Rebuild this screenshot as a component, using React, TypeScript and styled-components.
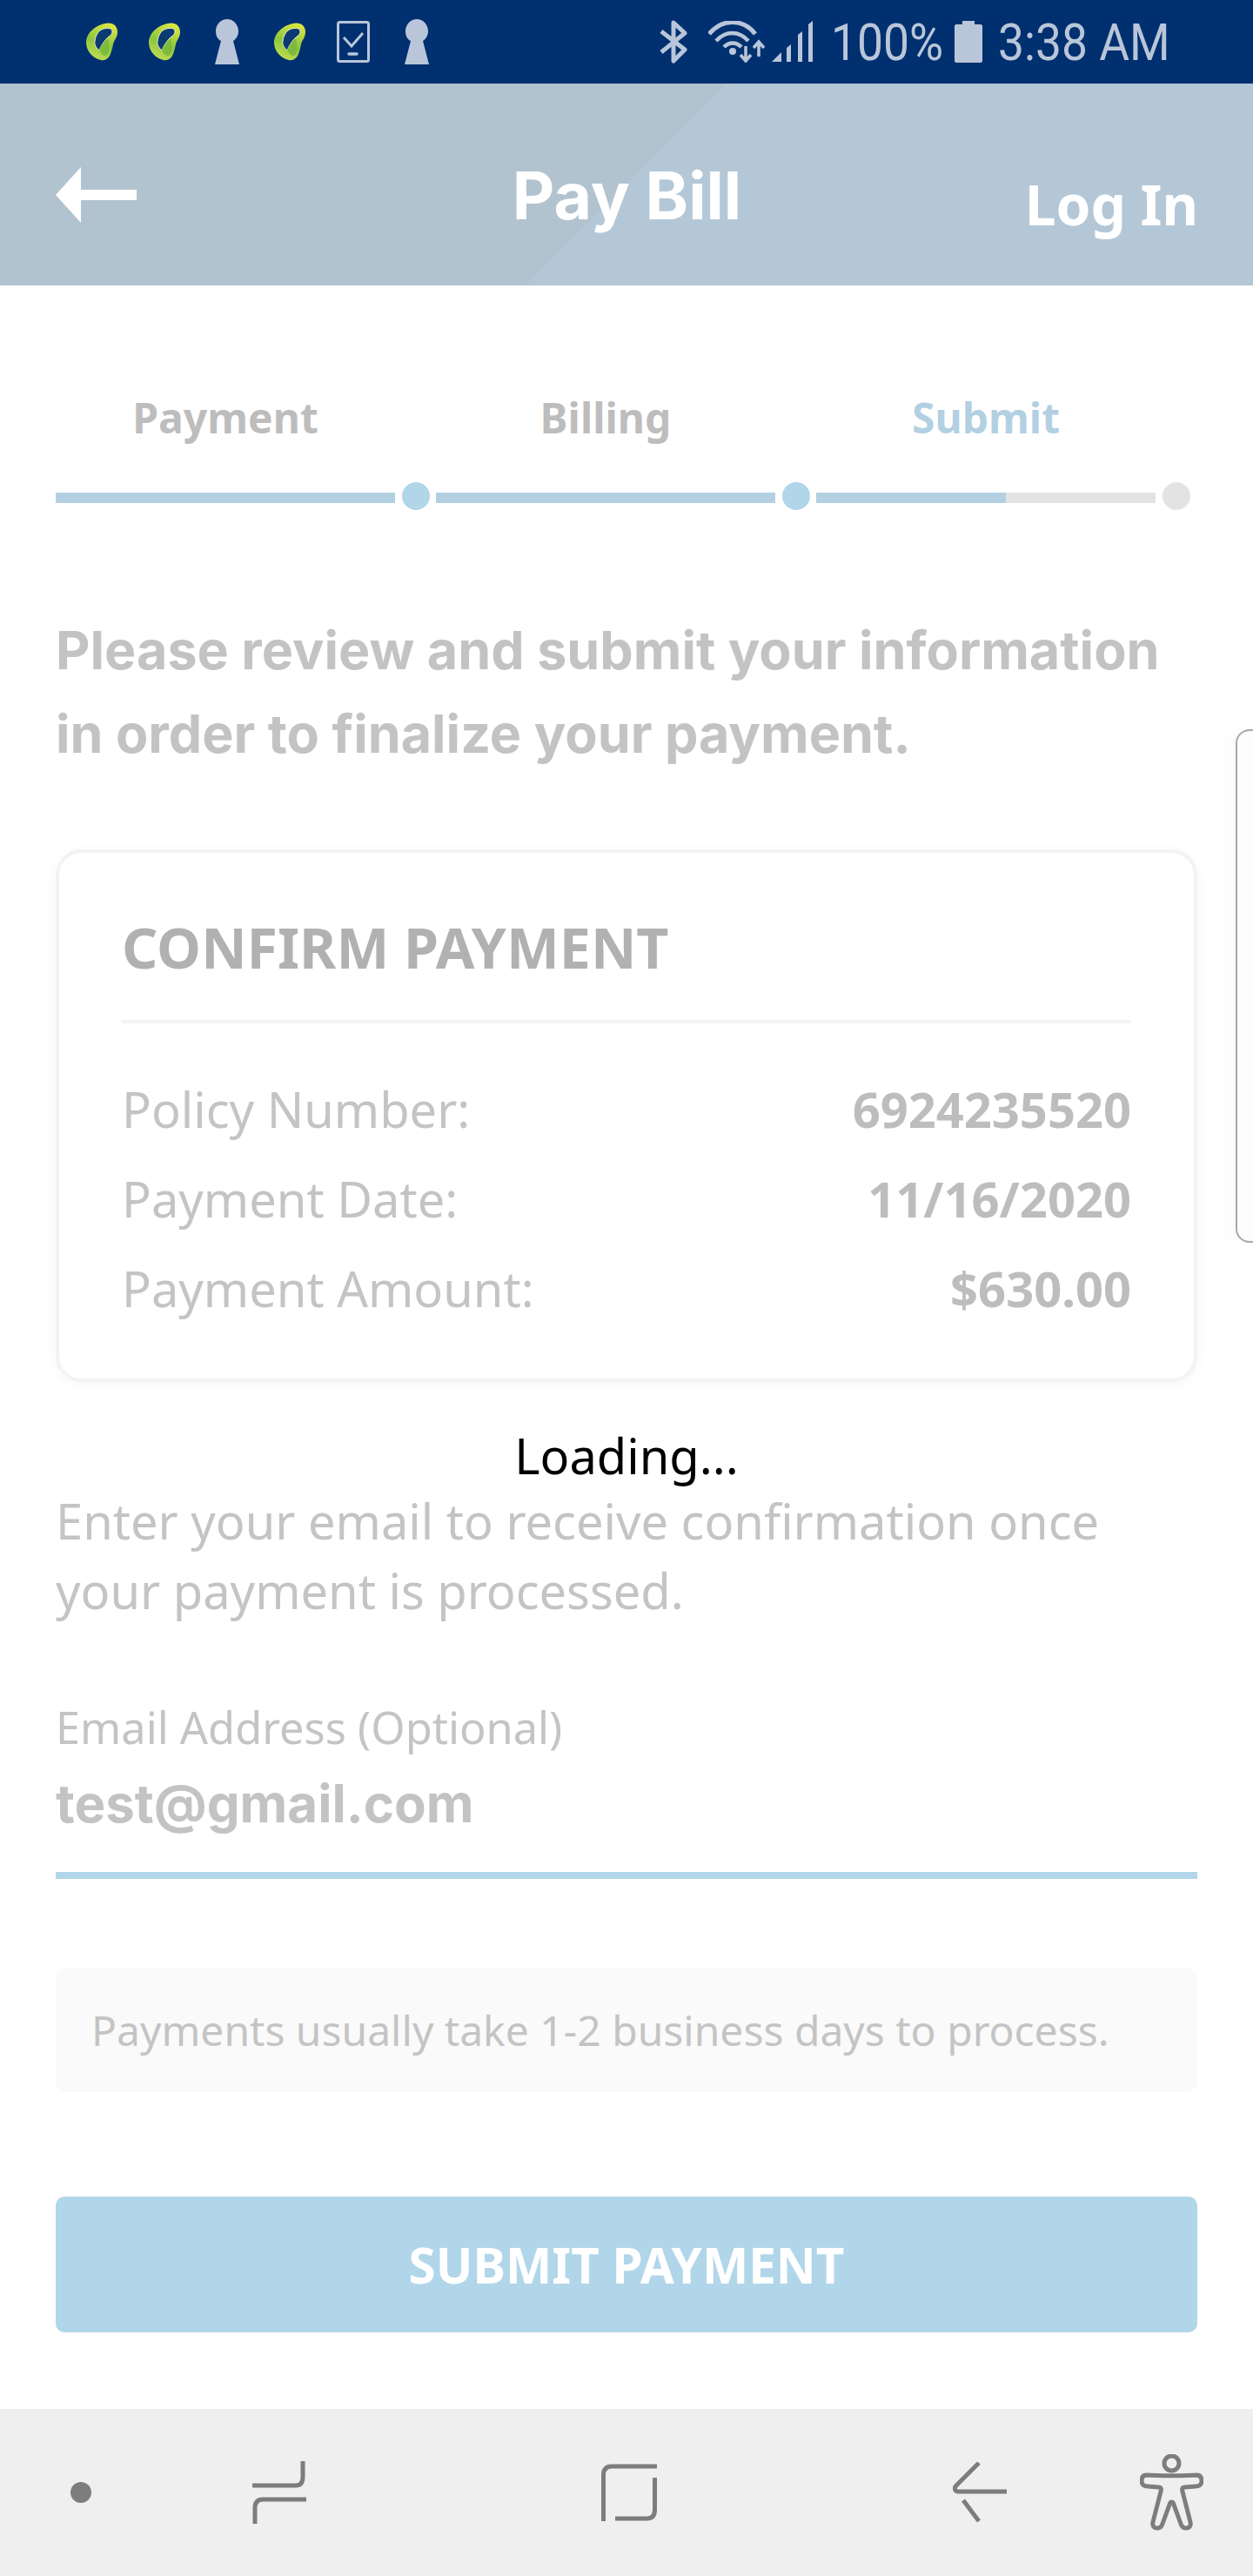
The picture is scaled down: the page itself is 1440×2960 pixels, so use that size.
import React from 'react';
import styled, { createGlobalStyle } from 'styled-components';

const GlobalStyle = createGlobalStyle`
  html, body {
    margin: 0;
    padding: 0;
    background: #fff;
    font-family: "Noto Sans", sans-serif;
  }
`;

const steps = [
  { label: 'Payment', fill: 100, done: true, color: '#bdbdbd' },
  { label: 'Billing', fill: 100, done: true, color: '#bdbdbd' },
  { label: 'Submit', fill: 56, done: false, color: '#b3d0e3' },
];

const rows = [
  ['Policy Number:', '6924235520'],
  ['Payment Date:', '11/16/2020'],
  ['Payment Amount:', '$630.00'],
];

const SeedIcon = () => (
  <svg width="36" height="44" viewBox="0 0 36 44">
    <defs>
      <linearGradient id="seed" x1="0.7" y1="0" x2="0.3" y2="1">
        <stop offset="0" stopColor="#dbe640" />
        <stop offset="0.55" stopColor="#8cc63f" />
        <stop offset="1" stopColor="#c4de52" />
      </linearGradient>
    </defs>
    <path
      d="M24 0.700C31 0 36 4 36 11C36 17 32 20 31 25C30 30 29 33 28 36C26 41 22 44 17 43C8 41 0 33 0 23C0 11 12 2 24 0.700Z"
      fill="url(#seed)"
    />
    <path
      d="M20 7C25 6 30 6 30 10C30 14 27 15 24 18C20 22 17 27 15 32C12 29 9 26 10 21C11 14 14 9 20 7Z"
      fill="#0c3a73"
      stroke="#eef3c4"
      strokeWidth="1"
    />
    <path d="M15 32C17 27 20 22 25 18C26 24 27 30 26 34C24 40 19 39 15 32Z" fill="#7dbb3c" />
  </svg>
);

const KeyholeIcon = () => (
  <Keyhole width="28" height="52" viewBox="0 0 28 52">
    <path d="M14 0C21 0 27 6 27 14C27 19 24 23 21 25L28 52H0L7 25C3 23 1 19 1 14C1 6 7 0 14 0Z" fill="#b9c6d9" />
  </Keyhole>
);

const PhoneCheckIcon = () => (
  <svg width="38" height="48" viewBox="0 0 38 48" fill="none" stroke="#b9c6d9">
    <rect x="1.500" y="1.500" width="35" height="45" rx="2" strokeWidth="3" />
    <path d="M8 19L17 29L30 14" strokeWidth="3" />
    <path d="M14 38H23" strokeWidth="3.500" strokeLinecap="round" />
  </svg>
);

const BluetoothIcon = () => (
  <svg width="32" height="50" viewBox="0 0 32 50" fill="none" stroke="#b9c6d9" strokeWidth="5" strokeLinejoin="round">
    <path d="M2 13L29 34L16 47V3L29 15L2 37" />
  </svg>
);

const WifiIcon = () => (
  <svg width="66" height="48" viewBox="0 0 66 48" fill="none" stroke="#b9c6d9">
    <path d="M1 15C16 -3 40 -3 54 15" strokeWidth="5" />
    <path d="M9 23C20 11 35 11 46 23" strokeWidth="4.500" />
    <path d="M18 30C24 24 32 24 38 30" strokeWidth="4.500" />
    <circle cx="28" cy="35" r="4" fill="#b9c6d9" stroke="none" />
    <path d="M43 29V45M37 39L43 46L49 39" strokeWidth="3.500" />
    <path d="M58 41V25M52 31L58 24L64 31" strokeWidth="3.500" />
  </svg>
);

const SignalIcon = () => (
  <svg width="48" height="48" viewBox="0 0 48 48" fill="#b9c6d9">
    <path d="M0 47L11 36V47Z" />
    <path d="M17 31L22 27V47H17Z" />
    <path d="M30 16L35 12V47H30Z" />
    <path d="M42 4L47 0V47H42Z" />
  </svg>
);

const BatteryIcon = () => (
  <svg width="32" height="48" viewBox="0 0 32 48" fill="#b9c6d9">
    <path d="M9 0H23V4H30C31 4 32 5 32 6V46C32 47 31 48 30 48H2C1 48 0 47 0 46V6C0 5 1 4 2 4H9Z" />
  </svg>
);

const BackArrow = () => (
  <svg width="93" height="64" viewBox="0 0 93 64" fill="#fff">
    <path d="M29 0V26H93V38H29V64L0 32Z" />
  </svg>
);

const RecentIcon = () => (
  <svg width="62" height="72" viewBox="0 0 62 72" fill="none" stroke="#7d7d7d">
    <path d="M58 0V18C58 25 55 28 50 28H0" strokeWidth="5" />
    <path d="M62 44H12C6 44 3 47 3 54V72" strokeWidth="5" />
  </svg>
);

const HomeIcon = () => (
  <svg width="64" height="66" viewBox="0 0 64 66" fill="none" stroke="#7d7d7d">
    <path d="M64 3H12C6 3 2.500 6 2.500 13V66" strokeWidth="5" />
    <path d="M61.500 16V53C61.500 60 58 63 52 63H16" strokeWidth="5" />
  </svg>
);

const BackIcon = () => (
  <svg width="62" height="70" viewBox="0 0 62 70" fill="none" stroke="#7d7d7d">
    <path d="M30 1L4 27C1 30 2 34 7 34H62" strokeWidth="5" />
    <path d="M12 44L30 68" strokeWidth="5" />
  </svg>
);

const AccessIcon = () => (
  <svg width="73" height="88" viewBox="0 0 73 88" fill="none" stroke="#7d7d7d" strokeWidth="5" strokeLinejoin="round">
    <circle cx="36.500" cy="10.500" r="8.500" />
    <path d="M8 24C20 25 53 25 65 24C70 24 71 28 71 31C71 35 68 37 64 37L51 38C49 38 48 40 49 43L58 78C59 82 57 85 53 85C50 85 48 83 47 80L39 58C38 54 35 54 34 58L26 80C25 83 23 85 20 85C16 85 14 82 15 78L24 43C25 40 24 38 22 38L9 37C5 37 2 35 2 31C2 28 3 24 8 24Z" />
  </svg>
);

const App: React.FC = () => {
  return (
    <Page>
      <GlobalStyle />
      <StatusBar>
        <StatusIcons>
          <SeedIcon />
          <SeedIcon />
          <KeyholeIcon />
          <SeedIcon />
          <PhoneCheckIcon />
          <KeyholeIcon />
        </StatusIcons>
        <StatusRight>
          <BluetoothIcon />
          <WifiSlot>
            <WifiIcon />
          </WifiSlot>
          <SignalIcon />
          <StatusText>100%</StatusText>
          <BatteryIcon />
          <ClockText>3:38 AM</ClockText>
        </StatusRight>
      </StatusBar>

      <Header>
        <BackButton>
          <BackArrow />
        </BackButton>
        <Title>Pay Bill</Title>
        <LogIn>Log In</LogIn>
      </Header>

      <Main>
        <Steps>
          {steps.map((step) => (
            <Step key={step.label}>
              <StepLabel $color={step.color}>{step.label}</StepLabel>
              <StepTrack>
                <StepBar>
                  <StepFill style={{ width: `${step.fill}%` }} />
                </StepBar>
                <StepDot $done={step.done} />
              </StepTrack>
            </Step>
          ))}
        </Steps>

        <Lead>
          Please review and submit your information
          <br />
          in order to finalize your payment.
        </Lead>

        <Card>
          <CardTitle>CONFIRM PAYMENT</CardTitle>
          {rows.map(([name, value]) => (
            <Row key={name}>
              <RowName>{name}</RowName>
              <RowValue>{value}</RowValue>
            </Row>
          ))}
        </Card>

        <Loading>Loading...</Loading>

        <Info>
          Enter your email to receive confirmation once
          <br />
          your payment is processed.
        </Info>

        <FieldLabel>Email Address (Optional)</FieldLabel>
        <FieldValue>test@gmail.com</FieldValue>

        <Note>Payments usually take 1-2 business days to process.</Note>

        <SubmitButton>SUBMIT PAYMENT</SubmitButton>
      </Main>

      <SideHandle />

      <NavBar>
        <NavDot />
        <NavItem $gap={185}>
          <RecentIcon />
        </NavItem>
        <NavItem $gap={339}>
          <HomeIcon />
        </NavItem>
        <NavItem $gap={340}>
          <BackIcon />
        </NavItem>
        <NavItem $gap={153}>
          <AccessIcon />
        </NavItem>
      </NavBar>
    </Page>
  );
};

export default App;

const Page = styled.div`
  position: relative;
  width: 1440px;
  height: 2960px;
  display: flex;
  flex-direction: column;
  background: #fff;
  overflow: hidden;
`;

const StatusBar = styled.div`
  height: 96px;
  flex: none;
  display: flex;
  justify-content: space-between;
  align-items: center;
  padding: 0 100px 0 99px;
  background: #003070;
`;

const StatusIcons = styled.div`
  display: flex;
  align-items: center;
  gap: 36px;
`;

const Keyhole = styled.svg`
  margin: 0 4px;
`;

const StatusRight = styled.div`
  display: flex;
  align-items: center;
`;

const WifiSlot = styled.div`
  display: flex;
  margin: 0 7px 0 24px;
`;

const StatusText = styled.span`
  font-family: Roboto, sans-serif;
  font-size: 60px;
  line-height: 60px;
  color: #b9c6d9;
  width: 123px;
  margin: 2px 19px 0 20px;
  white-space: nowrap;
  transform: scaleX(0.89);
  transform-origin: left center;
`;

const ClockText = styled(StatusText)`
  width: 193px;
  margin: 2px 0 0 18px;
`;

const Header = styled.header`
  height: 232px;
  flex: none;
  display: grid;
  grid-template-columns: 1fr auto 1fr;
  align-items: center;
  padding: 0 63px 0 64px;
  background: linear-gradient(135deg, #b2c3d0 50%, #b4c7d6 50%);
  color: #fff;
`;

const BackButton = styled.div`
  display: flex;
  height: 64px;
  margin-top: 24px;
`;

const Title = styled.h1`
  margin: 26px 0 0;
  font-family: Inter, sans-serif;
  font-weight: 700;
  font-size: 75px;
  line-height: 90px;
`;

const LogIn = styled.div`
  justify-self: end;
  font-weight: 700;
  font-size: 64px;
  line-height: 86px;
  margin-top: 46px;
`;

const Main = styled.main`
  flex: 1;
  display: flex;
  flex-direction: column;
  padding: 0 64px;
`;

const Steps = styled.div`
  display: flex;
  gap: 7px;
  padding: 122px 8px 0 0;
`;

const Step = styled.div`
  flex: 1;
  display: flex;
  flex-direction: column;
`;

const StepLabel = styled.div<{ $color: string }>`
  height: 60px;
  text-align: center;
  padding-right: 40px;
  font-weight: 700;
  font-size: 48px;
  line-height: 60px;
  color: ${(p) => p.$color};
`;

const StepTrack = styled.div`
  display: flex;
  align-items: center;
  gap: 8px;
  margin-top: 44px;
`;

const StepBar = styled.div`
  flex: 1;
  height: 12px;
  margin-top: 3px;
  background: #e3e3e3;
`;

const StepFill = styled.div`
  height: 100%;
  background: #b3d0e3;
`;

const StepDot = styled.div<{ $done: boolean }>`
  width: 32px;
  height: 32px;
  flex: none;
  border-radius: 50%;
  background: ${(p) => (p.$done ? '#b1d6ea' : '#e3e3e3')};
`;

const Lead = styled.p`
  margin: 113px 0 0;
  font-family: Inter, sans-serif;
  font-weight: 700;
  font-size: 61px;
  line-height: 96px;
  color: #c3c3c3;
  white-space: nowrap;
`;

const Card = styled.section`
  margin-top: 85px;
  height: 612px;
  box-sizing: border-box;
  padding: 65px 72px 0;
  background: #fff;
  border: 4px solid #f3f3f3;
  border-radius: 30px;
  box-shadow: 0 2px 14px rgba(0, 0, 0, 0.04);
`;

const CardTitle = styled.h2`
  margin: 0 0 47px;
  height: 131px;
  box-sizing: border-box;
  border-bottom: 4px solid #f3f3f3;
  font-weight: 700;
  font-size: 64.500px;
  line-height: 87px;
  color: #b1b1b1;
`;

const Row = styled.div`
  display: flex;
  justify-content: space-between;
  align-items: center;
  height: 104px;
  margin-top: -1px;
  font-size: 56px;
`;

const RowName = styled.span`
  color: #c4c4c4;
`;

const RowValue = styled.span`
  font-weight: 700;
  color: #bdbdbd;
`;

const Loading = styled.div`
  height: 84px;
  margin-top: 42px;
  text-align: center;
  font-size: 56px;
  line-height: 84px;
  color: #000;
`;

const Info = styled.p`
  margin: -7px 0 0;
  font-size: 56px;
  line-height: 80px;
  color: #c4c4c4;
  white-space: nowrap;
`;

const FieldLabel = styled.label`
  display: block;
  margin-top: 84px;
  font-size: 50.500px;
  line-height: 68px;
  color: #c4c4c4;
`;

const FieldValue = styled.div`
  box-sizing: border-box;
  height: 140px;
  padding-top: 10px;
  border-bottom: 8px solid #b1d6ea;
  font-family: Inter, sans-serif;
  font-weight: 700;
  font-size: 60px;
  line-height: 86px;
  color: #c3c3c3;
`;

const Note = styled.div`
  margin-top: 102px;
  height: 143px;
  display: flex;
  align-items: center;
  padding-left: 41px;
  border-radius: 12px;
  background: #fafafa;
  font-size: 48px;
  color: #c4c4c4;
`;

const SubmitButton = styled.button`
  margin-top: 120px;
  height: 156px;
  border: none;
  border-radius: 10px;
  background: #b1d6ea;
  color: #fff;
  font-family: "Noto Sans", sans-serif;
  font-weight: 700;
  font-size: 56.500px;
`;

const SideHandle = styled.div`
  position: absolute;
  top: 838px;
  right: -20px;
  width: 36px;
  height: 586px;
  border: 2px solid #a8a8a8;
  border-radius: 16px;
  background: #fdfdfd;
  box-shadow: -12px 0 16px rgba(0, 0, 0, 0.015);
`;

const NavBar = styled.nav`
  height: 192px;
  flex: none;
  display: flex;
  align-items: center;
  padding-left: 81px;
  background: #efefef;
`;

const NavDot = styled.div`
  width: 24px;
  height: 24px;
  border-radius: 50%;
  background: #7d7d7d;
`;

const NavItem = styled.div<{ $gap: number }>`
  display: flex;
  margin-left: ${(p) => p.$gap}px;
`;
